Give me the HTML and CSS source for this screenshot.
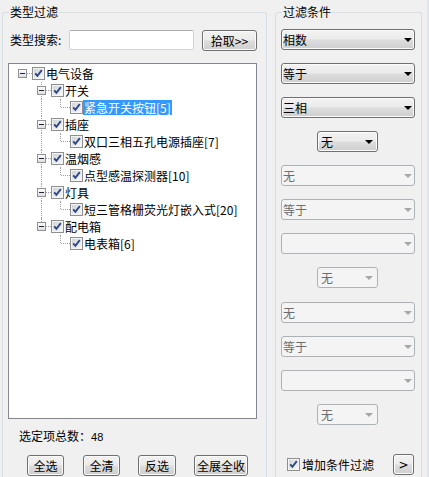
FILE: index.html
```html
<!DOCTYPE html>
<html lang="zh-CN">
<head>
<meta charset="utf-8">
<title>类型过滤</title>
<link rel="stylesheet" href="styles.css">
</head>
<body>
<svg class="defs" width="0" height="0" aria-hidden="true">
  <defs>
    <linearGradient id="cbg" x1="0" y1="0" x2="1" y2="1">
      <stop offset="0" stop-color="#cfd3d8"/>
      <stop offset="1" stop-color="#f7f7f7"/>
    </linearGradient>
    <linearGradient id="ebg" x1="0" y1="0" x2="0" y2="1">
      <stop offset="0" stop-color="#ffffff"/>
      <stop offset="1" stop-color="#dcdcdc"/>
    </linearGradient>
    <symbol id="chk" viewBox="0 0 13 13">
      <rect x="0.5" y="0.5" width="12" height="12" fill="#f4f4f4" stroke="#8e8f8f"/>
      <rect x="2" y="2" width="9" height="9" fill="url(#cbg)"/>
      <path d="M3.2 6.3 L5.4 8.8 L9.8 3.2" fill="none" stroke="#2d4687" stroke-width="1.9"/>
    </symbol>
    <symbol id="minus" viewBox="0 0 9 9">
      <rect x="0.5" y="0.5" width="8" height="8" fill="url(#ebg)" stroke="#919191"/>
      <path d="M2 4.5 H7" stroke="#1b2440" stroke-width="1"/>
    </symbol>
    <symbol id="arr" viewBox="0 0 8 4">
      <polygon points="0,0 8,0 4,4"/>
    </symbol>
  </defs>
</svg>

<div class="app">
  <fieldset class="group group-left">
    <legend>类型过滤</legend>
    <div class="left-body">
      <div class="search-row">
        <span class="search-label">类型搜索:</span>
        <input class="search-input" type="text">
        <button class="btn btn-pick">拾取&gt;&gt;</button>
      </div>

      <div class="tree">
        <div class="row">
          <span class="cell exp"><svg class="expbox"><use href="#minus"/></svg></span>
          <svg class="cb"><use href="#chk"/></svg><span class="label">电气设备</span>
        </div>

        <div class="row">
          <span class="ind"></span>
          <span class="cell exp vline"><svg class="expbox"><use href="#minus"/></svg></span>
          <svg class="cb"><use href="#chk"/></svg><span class="label">开关</span>
        </div>
        <div class="row">
          <span class="ind"></span><span class="ind vline"></span>
          <span class="cell conn"></span>
          <svg class="cb"><use href="#chk"/></svg><span class="label sel">紧急开关按钮[5]</span>
        </div>

        <div class="row">
          <span class="ind"></span>
          <span class="cell exp vline"><svg class="expbox"><use href="#minus"/></svg></span>
          <svg class="cb"><use href="#chk"/></svg><span class="label">插座</span>
        </div>
        <div class="row">
          <span class="ind"></span><span class="ind vline"></span>
          <span class="cell conn"></span>
          <svg class="cb"><use href="#chk"/></svg><span class="label">双口三相五孔电源插座[7]</span>
        </div>

        <div class="row">
          <span class="ind"></span>
          <span class="cell exp vline"><svg class="expbox"><use href="#minus"/></svg></span>
          <svg class="cb"><use href="#chk"/></svg><span class="label">温烟感</span>
        </div>
        <div class="row">
          <span class="ind"></span><span class="ind vline"></span>
          <span class="cell conn"></span>
          <svg class="cb"><use href="#chk"/></svg><span class="label">点型感温探测器[10]</span>
        </div>

        <div class="row">
          <span class="ind"></span>
          <span class="cell exp vline"><svg class="expbox"><use href="#minus"/></svg></span>
          <svg class="cb"><use href="#chk"/></svg><span class="label">灯具</span>
        </div>
        <div class="row">
          <span class="ind"></span><span class="ind vline"></span>
          <span class="cell conn"></span>
          <svg class="cb"><use href="#chk"/></svg><span class="label">短三管格栅荧光灯嵌入式[20]</span>
        </div>

        <div class="row">
          <span class="ind"></span>
          <span class="cell exp vhalf"><svg class="expbox"><use href="#minus"/></svg></span>
          <svg class="cb"><use href="#chk"/></svg><span class="label">配电箱</span>
        </div>
        <div class="row">
          <span class="ind"></span><span class="ind"></span>
          <span class="cell conn"></span>
          <svg class="cb"><use href="#chk"/></svg><span class="label">电表箱[6]</span>
        </div>
      </div>

      <div class="count">选定项总数：<span class="count-num">48</span></div>

      <div class="btn-row">
        <button class="btn btn-a">全选</button>
        <button class="btn btn-b">全清</button>
        <button class="btn btn-c">反选</button>
        <button class="btn btn-d">全展全收</button>
      </div>
    </div>
  </fieldset>

  <fieldset class="group group-right">
    <legend>过滤条件</legend>
    <div class="right-body">
      <div class="combos">
        <div class="combo"><span class="ctext">相数</span><svg class="arrow"><use href="#arr"/></svg></div>
        <div class="combo"><span class="ctext">等于</span><svg class="arrow"><use href="#arr"/></svg></div>
        <div class="combo"><span class="ctext">三相</span><svg class="arrow"><use href="#arr"/></svg></div>
        <div class="combo combo-sm"><span class="ctext">无</span><svg class="arrow"><use href="#arr"/></svg></div>

        <div class="combo disabled"><span class="ctext">无</span><svg class="arrow"><use href="#arr"/></svg></div>
        <div class="combo disabled"><span class="ctext">等于</span><svg class="arrow"><use href="#arr"/></svg></div>
        <div class="combo disabled"><span class="ctext"></span><svg class="arrow"><use href="#arr"/></svg></div>
        <div class="combo combo-sm disabled"><span class="ctext">无</span><svg class="arrow"><use href="#arr"/></svg></div>

        <div class="combo disabled shift"><span class="ctext">无</span><svg class="arrow"><use href="#arr"/></svg></div>
        <div class="combo disabled"><span class="ctext">等于</span><svg class="arrow"><use href="#arr"/></svg></div>
        <div class="combo disabled"><span class="ctext"></span><svg class="arrow"><use href="#arr"/></svg></div>
        <div class="combo combo-sm disabled"><span class="ctext">无</span><svg class="arrow"><use href="#arr"/></svg></div>
      </div>

      <div class="add-row">
        <svg class="cb"><use href="#chk"/></svg>
        <span class="add-label">增加条件过滤</span>
        <button class="btn btn-next">&gt;</button>
      </div>
    </div>
  </fieldset>

  <div class="edge"></div>
</div>
</body>
</html>
```

FILE: styles.css
```css
* { box-sizing: border-box; }

html, body {
  margin: 0;
  padding: 0;
}

body {
  width: 429px;
  height: 477px;
  overflow: hidden;
  background: #f0f0f0;
  font-family: "Noto Sans CJK SC", "Noto Sans", sans-serif;
  font-size: 12px;
  color: #000;
}

.defs {
  position: absolute;
  width: 0;
  height: 0;
}

.app {
  display: flex;
  align-items: flex-start;
  padding-left: 2px;
  height: 477px;
  overflow: hidden;
}

/* group boxes */
.group {
  margin: 5px 0 0 0;
  padding: 0;
  min-width: 0;
  border: 1px solid #d5dfe5;
  border-bottom-width: 0;
  border-radius: 3px 3px 0 0;
  height: 472px;
}

.group legend {
  margin-left: 6px;
  padding: 0 1px;
  font-size: 12px;
  line-height: 14px;
}

.group-left {
  width: 265px;
  flex: none;
}

.group-right {
  width: 147px;
  flex: none;
  margin-left: 8px;
}

.edge {
  width: 2px;
  height: 477px;
  margin-left: 5px;
  background: #dde6ee;
  flex: none;
}

.left-body {
  padding-top: 11px;
}

/* search row */
.search-row {
  display: flex;
  align-items: flex-start;
  height: 21px;
}

.search-label {
  width: 59px;
  margin-left: 7px;
  line-height: 20px;
}

.search-input {
  width: 125px;
  height: 20px;
  margin: 0;
  padding: 0 2px;
  border: 1px solid #d0d4d9;
  border-top-color: #abadb3;
  border-radius: 2px;
  background: #fff;
  font: inherit;
  outline: none;
}

/* buttons */
.btn {
  margin: 0;
  padding: 0;
  height: 21px;
  border: 1px solid #707070;
  border-radius: 3px;
  background: linear-gradient(#f2f2f2 0%, #ebebeb 48%, #dddddd 52%, #cfcfcf 100%);
  box-shadow: inset 0 0 0 1px #fbfbfb;
  font-family: "Noto Sans CJK SC", "Noto Sans", sans-serif;
  font-size: 12px;
  line-height: 18px;
  color: #000;
}

.btn-pick {
  width: 55px;
  margin-left: 8px;
}

/* tree */
.tree {
  margin: 12px 0 0 5px;
  width: 249px;
  height: 356px;
  border: 1px solid #828790;
  background: #fff;
  padding-top: 1px;
}

.row {
  display: flex;
  align-items: center;
  height: 17px;
}

.ind {
  width: 19px;
  height: 17px;
  flex: none;
  position: relative;
}

.cell {
  width: 23px;
  height: 17px;
  flex: none;
  position: relative;
  display: flex;
  align-items: center;
}

.vline::before {
  content: "";
  position: absolute;
  left: 13px;
  top: 0;
  height: 17px;
  border-left: 1px dotted #a0a0a0;
}

.vhalf::before,
.conn::before {
  content: "";
  position: absolute;
  left: 13px;
  top: 0;
  height: 8px;
  border-left: 1px dotted #a0a0a0;
}

.exp::after,
.conn::after {
  content: "";
  position: absolute;
  left: 14px;
  right: 0;
  top: 8px;
  border-top: 1px dotted #a0a0a0;
}

.expbox {
  width: 9px;
  height: 9px;
  margin-left: 9px;
  position: relative;
  z-index: 1;
}

.cb {
  width: 13px;
  height: 13px;
  flex: none;
}

.label {
  padding: 0 1px;
  line-height: 15px;
  white-space: nowrap;
}

.label.sel {
  background: #3399ff;
  color: #fff;
}

/* footer of left group */
.count {
  margin: 10px 0 0 16px;
  height: 14px;
  line-height: 14px;
  display: flex;
  align-items: baseline;
}

.count-num {
  font-family: "Liberation Sans", Arial, sans-serif;
  font-size: 11px;
  line-height: 14px;
}

.btn-row {
  display: flex;
  margin: 12px 0 0 24px;
}

.btn-a { width: 37px; }
.btn-b { width: 37px; margin-left: 19px; }
.btn-c { width: 38px; margin-left: 18px; }
.btn-d { width: 54px; margin-left: 18px; }

/* right group */
.right-body {
  padding-top: 10px;
}

.combos {
  display: flex;
  flex-direction: column;
  align-items: flex-start;
  gap: 13px;
}

.combo {
  display: flex;
  align-items: center;
  width: 134px;
  height: 21px;
  margin-left: 5px;
  padding-left: 1px;
  border: 1px solid #707070;
  border-radius: 3px;
  background: linear-gradient(#f2f2f2 0%, #ebebeb 48%, #dddddd 52%, #cfcfcf 100%);
  box-shadow: inset 0 0 0 1px #fbfbfb;
}

.combo.shift {
  margin-top: 1px;
}

.ctext {
  flex: 1;
  line-height: 18px;
}

.arrow {
  width: 8px;
  height: 4px;
  margin-right: 2px;
  fill: #000;
}

.combo-sm {
  width: 61px;
  margin-left: 41px;
  padding-left: 3px;
}

.combo-sm .arrow {
  margin-right: 4px;
}

.combo.disabled {
  border-color: #adb2b5;
  background: #f4f4f4;
  box-shadow: none;
  color: #6d6d6d;
}

.combo.disabled .arrow {
  fill: #a7a7a7;
}

.add-row {
  display: flex;
  align-items: center;
  height: 21px;
  margin-top: 29px;
  padding-left: 11px;
}

.add-label {
  margin-left: 2px;
  line-height: 16px;
}

.btn-next {
  width: 21px;
  margin-left: auto;
  margin-right: 7px;
  font-family: "DejaVu Sans", sans-serif;
  font-size: 12px;
}
```
